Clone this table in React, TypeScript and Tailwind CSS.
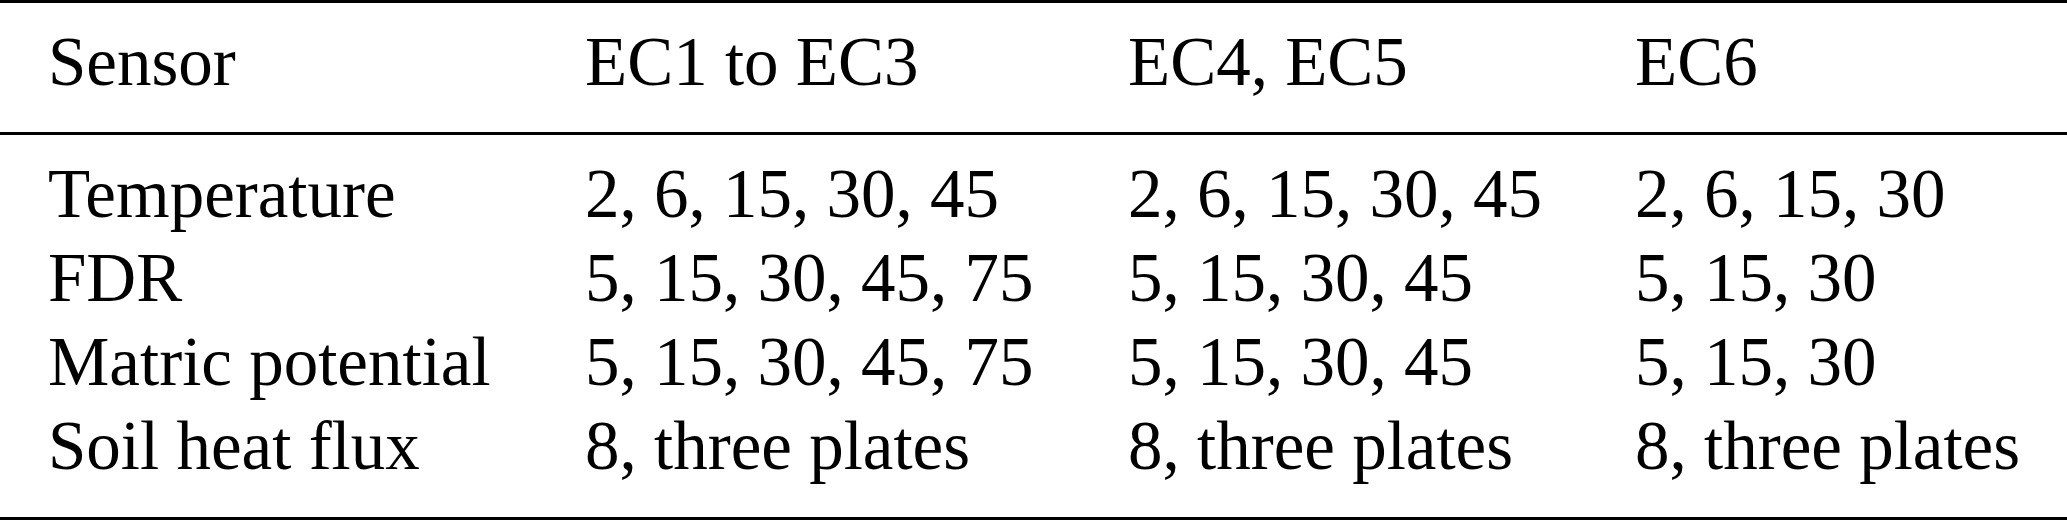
import React from "react";

const header = ["Sensor", "EC1 to EC3", "EC4, EC5", "EC6"];

const rows = [
  ["Temperature", "2, 6, 15, 30, 45", "2, 6, 15, 30, 45", "2, 6, 15, 30"],
  ["FDR", "5, 15, 30, 45, 75", "5, 15, 30, 45", "5, 15, 30"],
  ["Matric potential", "5, 15, 30, 45, 75", "5, 15, 30, 45", "5, 15, 30"],
  ["Soil heat flux", "8, three plates", "8, three plates", "8, three plates"],
];

function Row({ cells }: { cells: string[] }) {
  return (
    <div className="grid grid-cols-[537px_543px_507px_1fr] pl-[48px]">
      {cells.map((c, i) => (
        <div key={i} className="whitespace-nowrap">
          {c}
        </div>
      ))}
    </div>
  );
}

export default function App() {
  return (
    <div className="w-[2067px] min-h-[521px] bg-white text-black font-[family-name:'Liberation_Serif','Times_New_Roman',serif] text-[69px] leading-[84.3px]">
      {/* top rule */}
      <div className="h-[3px] bg-black" />
      <div className="pt-[16.6px] pb-[28px]">
        <Row cells={header} />
      </div>
      {/* mid rule */}
      <div className="h-[3px] bg-black" />
      <div className="pt-[16.7px] pb-[28px]">
        {rows.map((r, i) => (
          <Row key={i} cells={r} />
        ))}
      </div>
      {/* bottom rule */}
      <div className="h-[3px] bg-black" />
    </div>
  );
}
